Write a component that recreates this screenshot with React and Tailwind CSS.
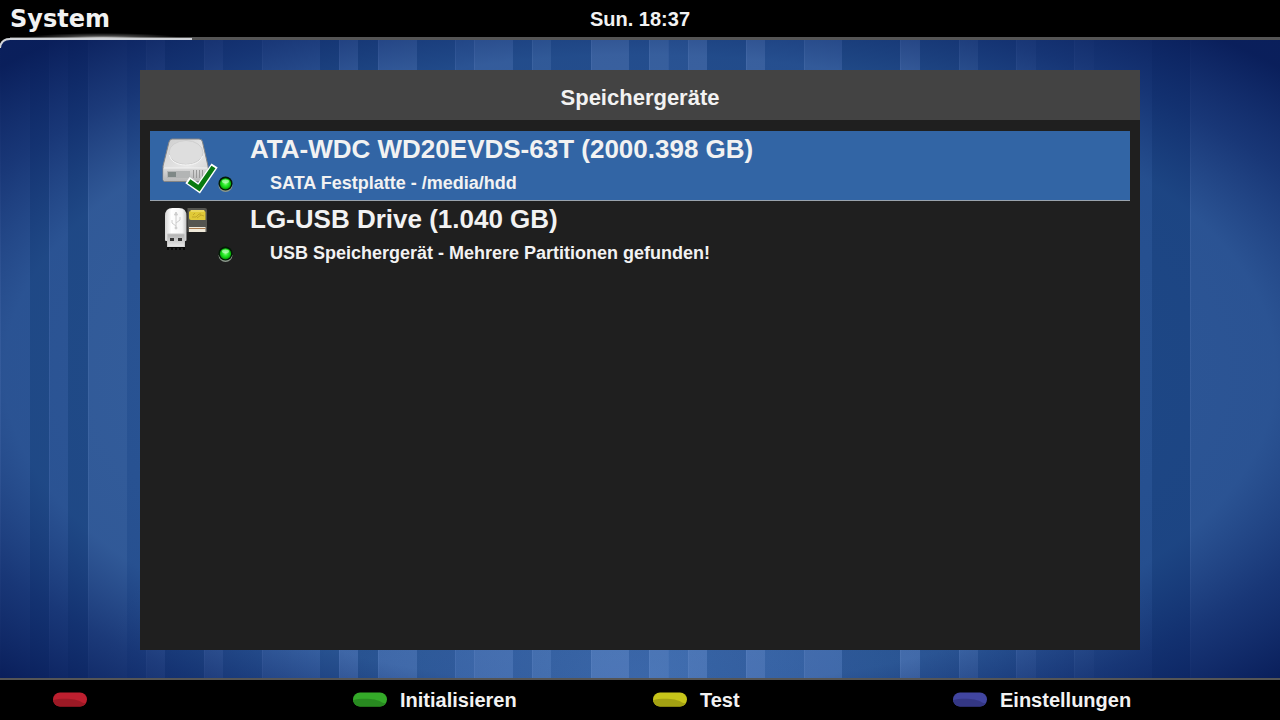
const STRIPES = [
  [0, 30, 0.02], [30, 19, -0.1], [49, 19, 0.02], [68, 20, -0.1], [88, 39, 0.05], [127, 19, 0],
  [146, 19, 0.07], [165, 39, -0.08], [204, 19, 0.06], [223, 39, -0.05], [262, 58, 0.04],
  [320, 19, -0.1], [339, 19, 0.07], [358, 20, -0.1], [378, 39, 0.07], [417, 38, -0.07],
  [455, 19, 0.02], [474, 39, 0.07], [513, 19, -0.05], [532, 19, 0.05], [551, 40, -0.05],
  [591, 38, 0.09], [629, 20, -0.04], [649, 19, 0.08], [668, 20, 0.01], [688, 19, 0.09],
  [707, 39, -0.06], [746, 19, 0.09], [765, 39, -0.02], [804, 38, 0.06], [842, 58, -0.09],
  [900, 20, 0.09], [920, 39, -0.08], [959, 19, 0.05], [978, 38, -0.07], [1016, 20, 0.04],
  [1036, 38, -0.04], [1074, 20, 0.03], [1094, 58, -0.02], [1152, 38, -0.14], [1190, 90, 0.02],
];

function Backdrop() {
  return (
    <svg className="absolute inset-0 h-full w-full" viewBox="0 0 1280 640" preserveAspectRatio="none" aria-hidden="true">
      <defs>
        <radialGradient id="floor" cx="0.5" cy="1" r="0.42">
          <stop offset="0" stopColor="#5a8cd0" stopOpacity="0.6" />
          <stop offset="1" stopColor="#5a8cd0" stopOpacity="0" />
        </radialGradient>
        <radialGradient id="shade" cx="0.5" cy="0.52" r="0.72">
          <stop offset="0.3" stopColor="#081c5c" stopOpacity="0" />
          <stop offset="0.69" stopColor="#0a2060" stopOpacity="0.12" />
          <stop offset="0.82" stopColor="#0a2060" stopOpacity="0.6" />
          <stop offset="0.96" stopColor="#081c58" stopOpacity="0.95" />
        </radialGradient>
      </defs>
      <rect width="1280" height="640" fill="#2b5797" />
      <rect width="1280" height="640" fill="url(#floor)" />
      {STRIPES.map(([x, w, a]) => (
        <g key={x}>
          <rect x={x} width={w} height="640" fill={a > 0 ? "#9cb8f0" : "#002c60"} opacity={Math.abs(a) * 2} />
          <rect x={x} width="1" height="640" fill="#a8c8ff" opacity={a > 0 ? 0.1 : 0} />
        </g>
      ))}
      <rect width="1280" height="640" fill="url(#shade)" />
    </svg>
  );
}

function Led() {
  return (
    <svg width="16" height="16" viewBox="0 0 16 16" role="img" aria-label="Bereit">
      <defs>
        <radialGradient id="led" cx="0.5" cy="0.45" r="0.55">
          <stop offset="0" stopColor="#8cff84" />
          <stop offset="0.4" stopColor="#2fee2f" />
          <stop offset="0.8" stopColor="#0cc40c" />
          <stop offset="1" stopColor="#067a06" />
        </radialGradient>
      </defs>
      <path d="M0.500 9a7 7 0 0 0 14 0" fill="#8c988c" />
      <circle cx="7.500" cy="7.500" r="7" fill="#031a06" />
      <circle cx="7.500" cy="7.800" r="5.600" fill="url(#led)" />
      <ellipse cx="7.500" cy="5.400" rx="3.500" ry="1.800" fill="#d8ffd8" opacity="0.6" />
    </svg>
  );
}

function DiskIcon() {
  return (
    <svg width="56" height="56" viewBox="0 0 56 56" aria-hidden="true">
      <defs>
        <linearGradient id="lid" x1="0" x2="1" y1="0" y2="1">
          <stop offset="0" stopColor="#cdcdcd" />
          <stop offset="0.6" stopColor="#e8e8e8" />
          <stop offset="1" stopColor="#cccccc" />
        </linearGradient>
        <linearGradient id="front" x1="0" x2="0" y1="0" y2="1">
          <stop offset="0" stopColor="#dadada" />
          <stop offset="1" stopColor="#b8b8b8" />
        </linearGradient>
      </defs>
      <path d="M10 1h27q3 0 3.500 3l5.500 24v14q0 1.500-1.500 1.500H3q-2 0-2-2V28L7 4q1-3 3-3z" fill="url(#lid)" stroke="#858585" />
      <ellipse cx="24" cy="14.500" rx="17" ry="12" fill="#dedede" stroke="#cfcfcf" />
      <path d="M7.500 17c1 6 7 10 16 10s15-3 17-9" fill="none" stroke="#f6f6f6" />
      <path d="M1.500 30h44v11.500q0 1.500-1.500 1.500H3q-1.500 0-1.500-1.500z" fill="url(#front)" />
      <path d="M2 30h43.500" stroke="#f2f2f2" />
      <rect x="5" y="33" width="23" height="7" fill="#b3b5b5" />
      <rect x="6" y="34" width="8" height="5" fill="#7f8886" />
      <path d="M31.500 32v8M34.500 32v8M37.500 32v8M40.500 32v8" stroke="#999" />
      <path d="M25.500 42.200L37 50.200 52.600 27.500" fill="none" stroke="#fff" strokeWidth="7.500" />
      <path d="M27 43.200L37 50.200 51.500 29" fill="none" stroke="#087a10" strokeWidth="4.800" />
    </svg>
  );
}

function UsbIcon() {
  return (
    <svg width="48" height="44" viewBox="-3 0 48 44" aria-hidden="true">
      <defs>
        <linearGradient id="stick" x1="0" x2="1" y1="0" y2="0">
          <stop offset="0" stopColor="#d5d5d5" />
          <stop offset="0.3" stopColor="#ffffff" />
          <stop offset="0.8" stopColor="#f4f4f4" />
          <stop offset="1" stopColor="#c4c4c4" />
        </linearGradient>
        <linearGradient id="plug" x1="0" x2="0" y1="0" y2="1">
          <stop offset="0" stopColor="#b0b0b0" />
          <stop offset="1" stopColor="#e8e8e8" />
        </linearGradient>
      </defs>
      <path d="M0 8q0-8 7.500-8h6.500q7.500 0 7.500 8v24q0 1-1 1h-19.500q-1 0-1-1z" fill="url(#stick)" />
      <g fill="none" stroke="#cccccc">
        <path d="M11 6v14M11 18l-4-3v-3M11 15l4-3V9" />
        <path d="M9.500 7L11 4l1.500 3z" fill="#cccccc" />
        <circle cx="11" cy="20" r="1" fill="#cccccc" />
      </g>
      <path d="M2.500 26h17v13h-17z" fill="url(#plug)" stroke="#c8c8c8" />
      <path d="M5 30h4v3H5zM13 30h4v3h-4z" fill="#333" />
      <path d="M2 39h18v3H2z" fill="#080808" />
      <path d="M5 40v2M9 40v2M13 40v2M17 40v2" stroke="#383838" />
      <path d="M22.500 0H40q2 0 2 2v22H22.500z" fill="#555550" />
      <path d="M26 2h13l1.500 2v8H26q-2 0-2-2V4z" fill="#e0c937" />
      <path d="M26 3h13" stroke="#f4e68a" />
      <path d="M27 9h4l3-3h2M32 10l4-3 3 1M30 5l-2 2" fill="none" stroke="#c2a628" />
      <path d="M24 19h16.500v5H24z" fill="#eee8d9" />
      <path d="M24 20.500h16.500" stroke="#a8794e" />
    </svg>
  );
}

const DEVICES = [
  { name: "ATA-WDC WD20EVDS-63T (2000.398 GB)", info: "SATA Festplatte - /media/hdd", Icon: DiskIcon, selected: true },
  { name: "LG-USB Drive (1.040 GB)", info: "USB Speichergerät - Mehrere Partitionen gefunden!", Icon: UsbIcon, selected: false },
];

const KEYS = [
  { id: "red", label: "", top: "#bd1f2f", low: "#9c1925" },
  { id: "green", label: "Initialisieren", top: "#34aa29", low: "#288a20" },
  { id: "yellow", label: "Test", top: "#c7c51a", low: "#a3a112" },
  { id: "blue", label: "Einstellungen", top: "#4145a0", low: "#343784" },
];

function KeyPill({ id, top, low }) {
  return (
    <svg className="shrink-0" width="36" height="16" viewBox="0 0 36 16" aria-hidden="true">
      <clipPath id={`pill-${id}`}>
        <rect x="1" y="0.500" width="34" height="14" rx="7" />
      </clipPath>
      <g clipPath={`url(#pill-${id})`}>
        <rect width="36" height="16" fill={top} />
        <path d="M0 8.500C8 6 24 6 30 10.500q3 1.500 6 0V16H0z" fill={low} />
      </g>
    </svg>
  );
}

export default function App() {
  return (
    <div className="flex min-h-screen flex-col bg-black font-['Liberation_Sans',Arial,sans-serif] font-bold text-[#f2f2f2]">
      <header className="relative grid h-10 grid-cols-3 items-center border-b-3 border-[#555] px-2.5">
        <h1 className="font-['DejaVu_Sans',sans-serif] text-2xl leading-8">System</h1>
        <time className="text-center text-xl">Sun. 18:37</time>
        <svg className="absolute top-8 left-0 z-10" width="192" height="18" viewBox="0 0 192 18" aria-hidden="true">
          <defs>
            <radialGradient id="glow" cx="0.5" cy="1" r="0.5" gradientTransform="translate(0 -1) scale(1 2)">
              <stop offset="0" stopColor="#fff" stopOpacity="0.7" />
              <stop offset="0.5" stopColor="#fff" stopOpacity="0.25" />
              <stop offset="1" stopColor="#fff" stopOpacity="0" />
            </radialGradient>
          </defs>
          <rect x="25" y="1" width="155" height="5" fill="url(#glow)" />
          <path d="M0 5h10v2Q0 7 0 16z" fill="#000" />
          <path d="M0 16Q1 7 10 7H192" fill="none" stroke="#d0d3d8" strokeWidth="2" />
        </svg>
      </header>
      <main className="relative flex flex-1 flex-col px-[140px] pt-[30px] pb-7">
        <Backdrop />
        <section className="relative flex flex-1 flex-col bg-[#1f1f1f]">
          <h2 className="bg-[#434343] pt-3 pb-1.5 text-center text-[22px] leading-8">Speichergeräte</h2>
          <ul className="px-2.5 pt-[11px]">
            {DEVICES.map(({ name, info, Icon, selected }) => (
              <li key={name}>
                <button
                  type="button"
                  className={`flex h-[70px] w-full border-b text-left ${selected ? "border-[#9aa3ad] bg-[#3265a5]" : "border-transparent"}`}
                >
                  <span className="flex w-[100px] shrink-0 pt-[7px] pl-3">
                    <span className="w-14"><Icon /></span>
                    <span className="self-end pb-2"><Led /></span>
                  </span>
                  <span className="flex flex-col">
                    <span className="text-[26px] leading-9">{name}</span>
                    <span className="pl-5 text-lg leading-8">{info}</span>
                  </span>
                </button>
              </li>
            ))}
          </ul>
        </section>
      </main>
      <footer className="grid h-[42px] grid-cols-[300fr_300fr_300fr_276fr] items-center border-t-2 border-[#555] px-[52px]">
        {KEYS.map(({ id, label, top, low }) => (
          <button key={id} type="button" aria-label={label || "Rot"} className="flex items-center gap-3 text-xl">
            <KeyPill id={id} top={top} low={low} />
            {label}
          </button>
        ))}
      </footer>
    </div>
  );
}
